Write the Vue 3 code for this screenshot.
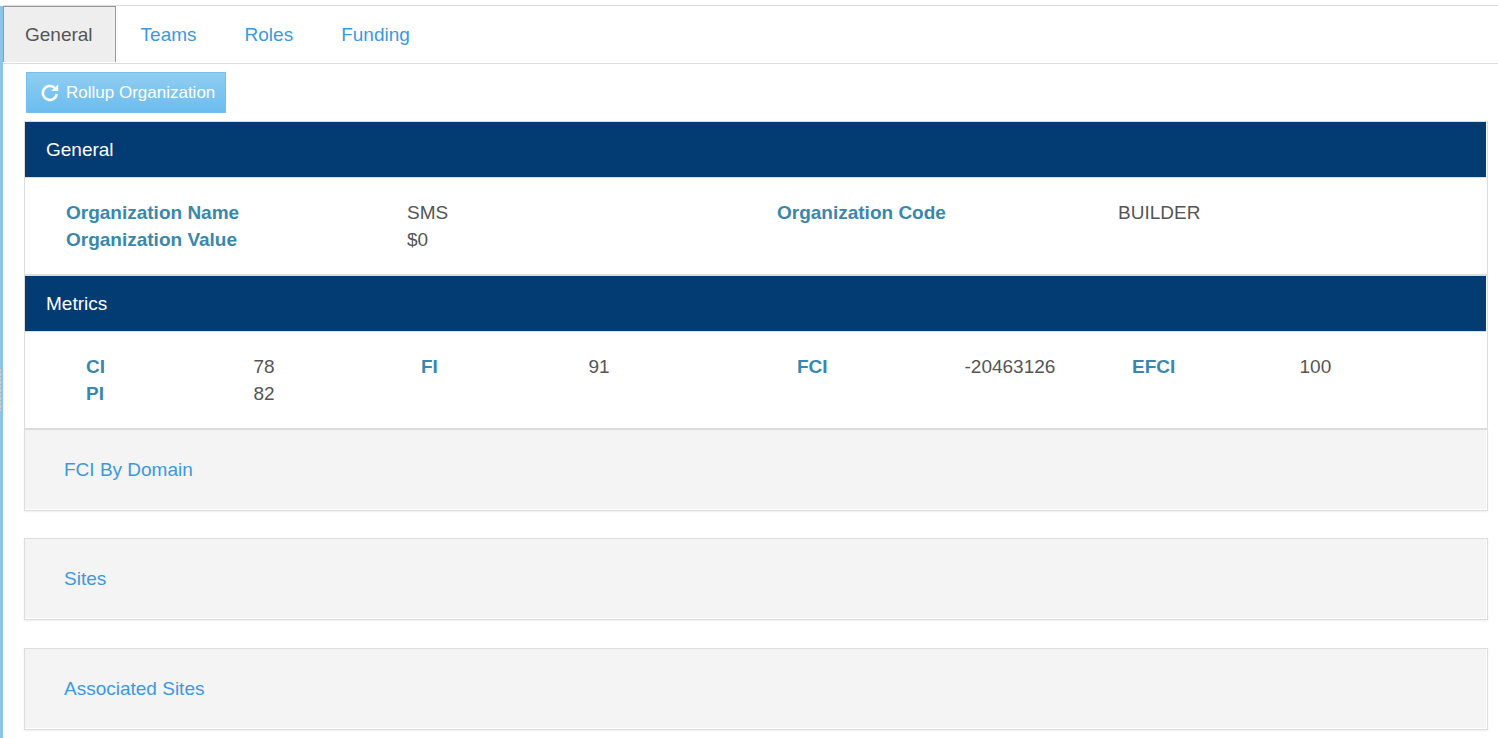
<script setup>
import { ref } from 'vue'

const tabs = ['General', 'Teams', 'Roles', 'Funding']
const active = ref('General')

const general = [
  [
    ['Organization Name', 'SMS'],
    ['Organization Value', '$0'],
  ],
  [['Organization Code', 'BUILDER']],
]

const metrics = [
  [
    ['CI', '78'],
    ['FI', '91'],
    ['PI', '82'],
  ],
  [
    ['FCI', '-20463126'],
    ['EFCI', '100'],
  ],
]
</script>

<template>
  <div class="page">
    <div class="splitter"><span class="grip"></span></div>
    <main class="main">
      <nav class="tabs">
        <a
          v-for="tab in tabs"
          :key="tab"
          href="#"
          class="tab"
          :class="{ active: tab === active }"
          @click.prevent="active = tab"
        >{{ tab }}</a>
      </nav>

      <div class="content">
        <button type="button" class="rollup">
          <svg class="icon" viewBox="0 0 18 18" aria-hidden="true">
            <path d="M13.4 3.6A7 7 0 1 0 15.8 10" fill="none" stroke="#fff" stroke-width="2.6" />
            <path d="M17.2 0.2V7H10.2Z" fill="#fff" />
          </svg>
          <span>Rollup Organization</span>
        </button>

        <div class="stack">
          <section class="panel">
            <h2 class="heading">General</h2>
            <div class="body">
              <dl v-for="(half, i) in general" :key="i" class="fields">
                <div v-for="[label, value] in half" :key="label" class="field">
                  <dt>{{ label }}</dt>
                  <dd>{{ value }}</dd>
                </div>
              </dl>
            </div>
          </section>

          <section class="panel">
            <h2 class="heading">Metrics</h2>
            <div class="body">
              <dl v-for="(half, i) in metrics" :key="i" class="fields metrics">
                <div v-for="[label, value] in half" :key="label" class="field">
                  <dt>{{ label }}</dt>
                  <dd>{{ value }}</dd>
                </div>
              </dl>
            </div>
          </section>

          <section class="card"><div class="fill"><a href="#">FCI By Domain</a></div></section>
        </div>

        <div class="cards">
          <section class="card"><div class="fill"><a href="#">Sites</a></div></section>
          <section class="card"><div class="fill"><a href="#">Associated Sites</a></div></section>
        </div>
      </div>
    </main>
  </div>
</template>

<style>
body {
  margin: 0;
  background: #fff;
}
</style>

<style scoped>
.page {
  display: flex;
  box-sizing: border-box;
  min-height: 100vh;
  padding-top: 5px;
  font: 19px/27px "Liberation Sans", Arial, sans-serif;
  color: #555;
}
a {
  color: #3b99e0;
  text-decoration: none;
}
.splitter {
  display: flex;
  align-items: center;
  width: 3px;
  margin-top: 1px;
  background: #8ac4e8;
}
.grip {
  width: 1px;
  height: 42px;
  margin-top: 36px;
  background: repeating-linear-gradient(#c9ccce 0 3px, #8ac4e8 3px 4px);
}
.main {
  flex: 1;
  min-width: 0;
  border-top: 1px solid #ddd;
}
.tabs {
  display: flex;
  gap: 2px;
  padding-bottom: 1px;
  border-bottom: 1px solid #ddd;
}
.tab {
  padding: 14px 22px;
  border: 1px solid transparent;
  border-bottom: 0;
}
.tab.active {
  padding-left: 21px;
  border-color: #999;
  background: #eee;
  color: #555;
}
.content {
  padding: 8px 10px 8px 21px;
}
.rollup {
  display: flex;
  align-items: center;
  gap: 7px;
  height: 41px;
  margin: 0 0 8px 2px;
  padding: 0 10px 0 14px;
  border: 1px solid #77c0ee;
  background: linear-gradient(#90cdf2, #6bbdee);
  color: #fff;
  font: 17px/20px "Liberation Sans", Arial, sans-serif;
}
.icon {
  width: 18px;
  height: 18px;
}
.panel {
  border: 1px solid #ddd;
}
.heading {
  margin: 0 1px 0 0;
  padding: 14px 21px;
  border-bottom: 1px solid #ddd;
  background: #033c73;
  color: #fff;
  font-size: 19px;
  font-weight: normal;
  line-height: 27px;
}
.body {
  display: grid;
  grid-template-columns: 1fr 1fr;
  padding: 21px 20px;
}
.fields {
  display: grid;
  grid-template-columns: 1fr;
  align-content: start;
  margin: 0;
  padding: 0 8px 0 21px;
}
.metrics {
  grid-template-columns: 1fr 1fr;
  padding: 0 0 0 41px;
}
.field {
  display: grid;
  grid-template-columns: 1fr 1fr;
}
dt {
  color: #3a87ad;
  font-weight: bold;
}
dd {
  margin: 0;
}
.card {
  padding: 0 1px 1px 0;
  border: 1px solid #ddd;
  box-shadow: 0 1px 2px rgba(0, 0, 0, 0.07);
}
.fill {
  padding: 26px 39px;
  background: #f4f4f4;
}
.cards {
  display: grid;
  gap: 28px;
  margin-top: 27px;
}
</style>
